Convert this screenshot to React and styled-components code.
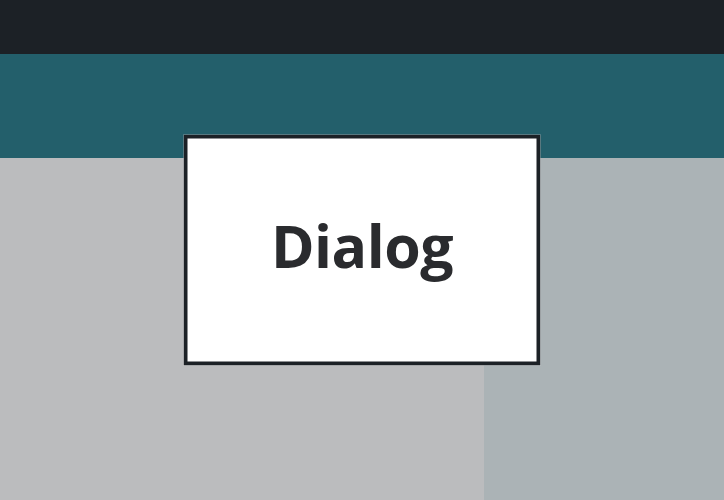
import React from 'react';
import styled, { createGlobalStyle } from 'styled-components';

const GlobalStyle = createGlobalStyle`
  html, body {
    margin: 0;
    padding: 0;
    height: 100%;
  }
  body {
    font-family: "Open Sans", "Noto Sans", sans-serif;
    background: #bbbcbe;
  }
  #root {
    height: 100%;
  }
`;

const Page = styled.div`
  height: 100vh;
  display: flex;
  flex-direction: column;
`;

const TopBar = styled.div`
  height: 54px;
  background: #1c2126;
  flex-shrink: 0;
`;

const Band = styled.div`
  height: 104px;
  background: #235f6b;
  flex-shrink: 0;
`;

const Body = styled.div`
  flex: 1;
  display: grid;
  grid-template-columns: 484px 1fr;
`;

const Pane = styled.div`
  background: ${(p) => (p.$side ? '#abb3b6' : '#bbbcbe')};
`;

const Dialog = styled.div`
  position: fixed;
  left: 50%;
  top: 50%;
  transform: translate(-50%, -50%);
  box-sizing: border-box;
  width: 357px;
  height: 231px;
  padding-bottom: 12px;
  background: #ffffff;
  border: 4px solid #1c2126;
  display: flex;
  align-items: center;
  justify-content: center;
`;

const Title = styled.h1`
  margin: 0;
  font-size: 59px;
  font-weight: 700;
  color: #2a2b2e;
  letter-spacing: -0.5px;
`;

export default function App() {
  return (
    <>
      <GlobalStyle />
      <Page>
        <TopBar />
        <Band />
        <Body>
          <Pane />
          <Pane $side />
        </Body>
      </Page>
      <Dialog>
        <Title>Dialog</Title>
      </Dialog>
    </>
  );
}
